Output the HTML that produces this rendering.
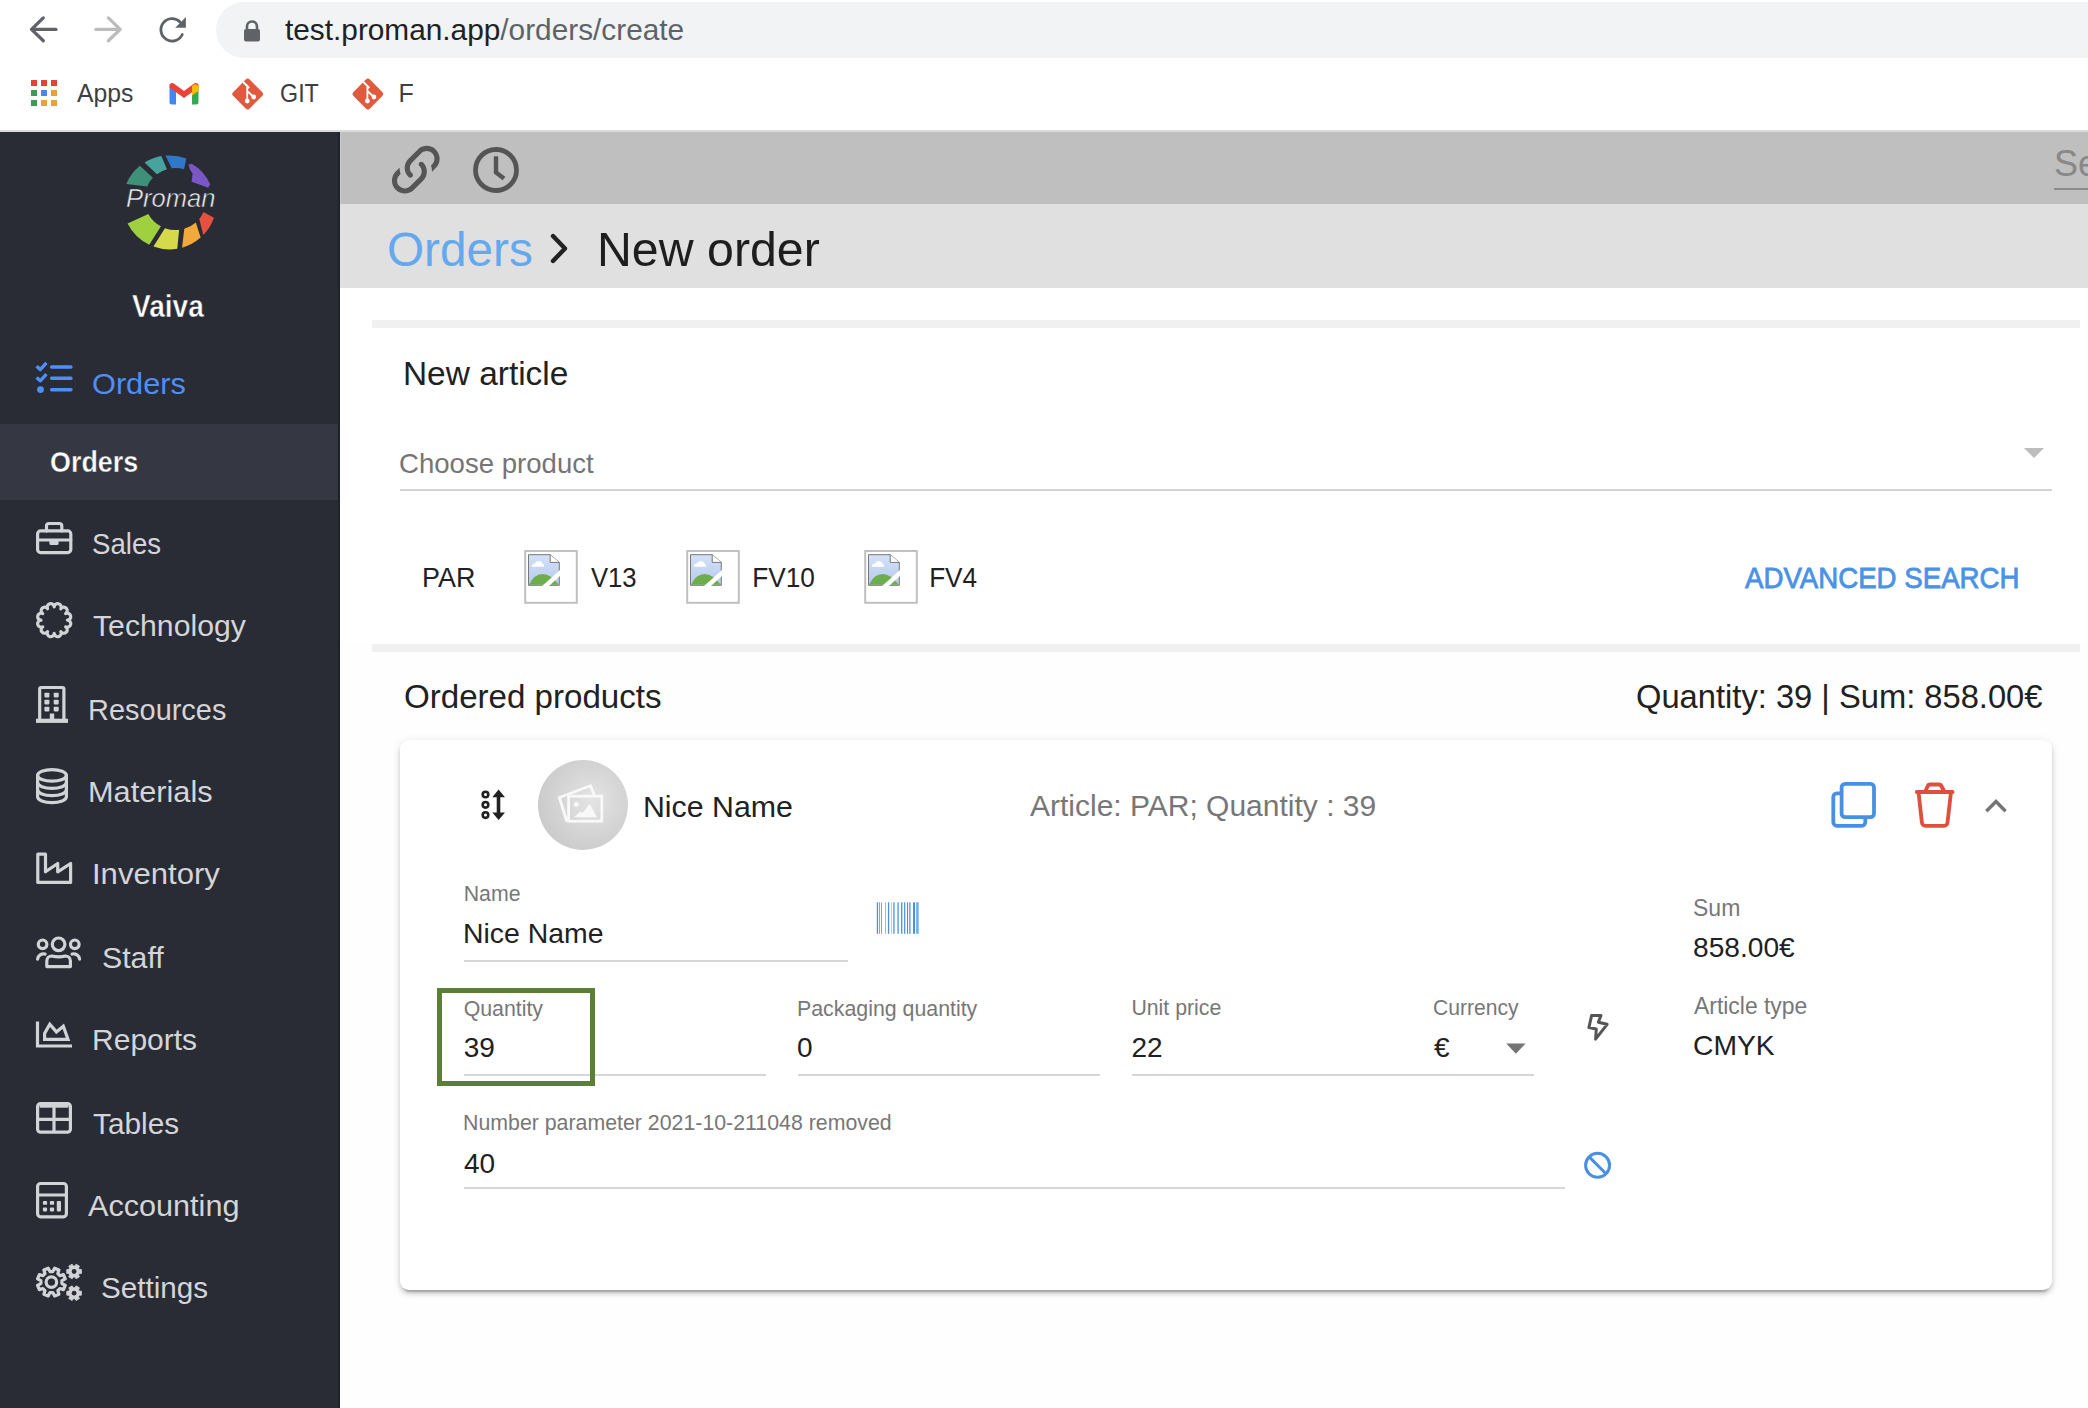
<!DOCTYPE html>
<html><head><meta charset="utf-8">
<style>
html,body{margin:0;padding:0;width:2088px;height:1408px;overflow:hidden;background:#fefefe;font-family:"Liberation Sans",sans-serif;}
.a{position:absolute;}
.t{position:absolute;white-space:nowrap;}
svg{position:absolute;overflow:visible;}
</style></head><body>
<!-- ===== Chrome ===== -->
<div class="a" style="left:0;top:0;width:2088px;height:130px;background:#fff"></div>
<div class="a" style="left:216px;top:2px;width:1900px;height:56px;border-radius:28px;background:#f1f3f4"></div>
<div class="a" style="left:0;top:130px;width:2088px;height:2px;background:#d9dadc"></div>
<!-- back -->
<svg style="left:0;top:0" width="2088" height="130">
 <path d="M43.3 17.9 L31.5 29.4 L43.3 40.8 M31.5 29.4 H56" fill="none" stroke="#5f6368" stroke-width="3.3" stroke-linecap="round" stroke-linejoin="round"/>
 <path d="M108.4 17.9 L120.2 29.4 L108.4 40.8 M120.2 29.4 H95.9" fill="none" stroke="#bbbcbe" stroke-width="3.3" stroke-linecap="round" stroke-linejoin="round"/>
 <path d="M182.3 34.5 A11.2 11.2 0 1 1 180 21.9" fill="none" stroke="#5f6368" stroke-width="2.8" stroke-linecap="round"/>
 <path d="M185.9 17.1 V27.8 H175.2 Z" fill="#5f6368"/>
 <!-- lock -->
 <path d="M247 30 v-3.5 a5 5 0 0 1 10 0 v3.5" fill="none" stroke="#5f6368" stroke-width="2.6"/>
 <rect x="244" y="29" width="16" height="12.5" rx="2" fill="#5f6368"/>
 <!-- apps grid -->
 <rect x="31" y="80" width="6" height="6" fill="#e34234"/><rect x="41" y="80" width="6" height="6" fill="#e34234"/><rect x="51" y="80" width="6" height="6" fill="#e34234"/>
 <rect x="31" y="90" width="6" height="6" fill="#3f9a55"/><rect x="41" y="90" width="6" height="6" fill="#4a86e8"/><rect x="51" y="90" width="6" height="6" fill="#e8a23a"/>
 <rect x="31" y="100" width="6" height="6" fill="#3f9a55"/><rect x="41" y="100" width="6" height="6" fill="#e8a23a"/><rect x="51" y="100" width="6" height="6" fill="#e8a23a"/>
 <!-- gmail -->
 <g transform="translate(169.5,83)">
  <path d="M0 4 a3 3 0 0 1 5 -2 L6.5 3.2 V21.6 H2.5 a2.5 2.5 0 0 1 -2.5 -2.5z" fill="#4285f4"/>
  <path d="M22.5 3.2 L24 2 a3 3 0 0 1 5 2 V19.1 a2.5 2.5 0 0 1 -2.5 2.5 H22.5z" fill="#34a853"/>
  <path d="M0 4.5 L14.5 15 L29 4.5 L29 1.5 a3 3 0 0 0 -5 -0.5 L14.5 8 L5 1 a3 3 0 0 0 -5 0.5z" fill="#ea4335"/>
  <path d="M22.5 3.2 L24 2 a3 3 0 0 1 5 2 V8 L22.5 12.5z" fill="#fbbc04"/>
 </g>
 <!-- git logos -->
 <g transform="translate(247.7,94)">
  <rect x="-11.6" y="-11.6" width="23.2" height="23.2" rx="2.5" transform="rotate(45)" fill="#e05a3f"/>
  <path d="M-4.5 -12 L1.5 -6 M-0.5 -8 V7 M-0.5 -3 L6 3" stroke="#fff" stroke-width="1.8" fill="none"/>
  <circle cx="-0.5" cy="7" r="2.4" fill="#fff"/><circle cx="6" cy="3" r="2.4" fill="#fff"/>
 </g>
 <g transform="translate(367.9,94)">
  <rect x="-11.6" y="-11.6" width="23.2" height="23.2" rx="2.5" transform="rotate(45)" fill="#e05a3f"/>
  <path d="M-4.5 -12 L1.5 -6 M-0.5 -8 V7 M-0.5 -3 L6 3" stroke="#fff" stroke-width="1.8" fill="none"/>
  <circle cx="-0.5" cy="7" r="2.4" fill="#fff"/><circle cx="6" cy="3" r="2.4" fill="#fff"/>
 </g>
</svg>
<div class="t" style="left:285px;top:14.5px;font-size:29.8px;line-height:30px;color:#202124">test.proman.app<span style="color:#5f6368">/orders/create</span></div>

<!-- ===== Sidebar ===== -->
<div class="a" style="left:0;top:132px;width:340px;height:1276px;background:#292c35"></div>
<div class="a" style="left:0;top:424px;width:340px;height:76px;background:#353842"></div>
<div class="a" style="left:338px;top:132px;width:2px;height:1276px;background:#20222a"></div>
<svg style="left:0;top:0" width="340" height="1408">
 <path d="M126.24 184.04 A47 47 0 0 1 139.92 165.87 L152.83 177.86 A31 31 0 0 0 147.18 186.39 Z" fill="#3e9079"/>
<path d="M144.59 162.54 A47 47 0 0 1 161.34 156.11 L166.96 169.20 A31 31 0 0 0 156.84 174.24 Z" fill="#48a39c"/>
<path d="M165.40 155.58 A47 47 0 0 1 186.34 158.52 L184.04 169.20 A31 31 0 0 0 171.72 168.23 Z" fill="#3077c9"/>
<path d="M191.75 163.86 A44.5 44.5 0 0 1 210.15 184.30 L208.2 187.7 L191.6 181.7 L192.6 173.4 L190.2 170 L188.4 164.8 Z" fill="#7b57c5"/>
<path d="M213.94 217.70 A47 47 0 0 1 203.31 235.05 L199.25 218.93 A31 31 0 0 0 203.60 212.10 Z" fill="#e5503f"/>
<path d="M200.64 237.60 A47 47 0 0 1 182.06 247.69 L184.30 228.72 A31 31 0 0 0 195.84 222.40 Z" fill="#f0a93a"/>
<path d="M177.26 248.76 A47 47 0 0 1 153.43 246.57 L164.90 228.13 A31 31 0 0 0 179.12 229.79 Z" fill="#d5d94a"/>
<path d="M149.27 244.82 A47 47 0 0 1 127.55 223.59 L148.33 213.93 A31 31 0 0 0 160.95 226.37 Z" fill="#9fd03f"/>
 <g fill="none" stroke="#4f8ef7" stroke-width="3.4" stroke-linecap="round" stroke-linejoin="round">
  <path d="M36.6 366.2 L40.3 369.6 L46.4 362.9" stroke-linecap="butt"/>
  <path d="M36.6 377.4 L40.3 380.8 L46.4 374.1" stroke-linecap="butt"/>
  <path d="M51.6 367 H71 M51.6 378.3 H71 M51.6 389.7 H71"/>
 </g>
 <circle cx="40.5" cy="389.6" r="3.4" fill="#4f8ef7"/>
 <g fill="none" stroke="#d2d3d6" stroke-width="3.2" stroke-linecap="round" stroke-linejoin="round">
  <!-- sales -->
  <rect x="37.6" y="530.9" width="33.2" height="21.7" rx="3"/>
  <path d="M46.5 530.9 V526 a2.5 2.5 0 0 1 2.5 -2.5 H59.3 a2.5 2.5 0 0 1 2.5 2.5 V530.9"/>
  <path d="M37.6 540 H70.8"/>
  <!-- technology rosette -->
  <path d="M54.20 607.00 A3.5 3.5 0 1 1 60.80 608.77 A3.5 3.5 0 1 1 65.63 613.60 A3.5 3.5 0 1 1 67.40 620.20 A3.5 3.5 0 1 1 65.63 626.80 A3.5 3.5 0 1 1 60.80 631.63 A3.5 3.5 0 1 1 54.20 633.40 A3.5 3.5 0 1 1 47.60 631.63 A3.5 3.5 0 1 1 42.77 626.80 A3.5 3.5 0 1 1 41.00 620.20 A3.5 3.5 0 1 1 42.77 613.60 A3.5 3.5 0 1 1 47.60 608.77 A3.5 3.5 0 1 1 54.20 607.00 Z"/>
  <!-- resources building -->
  <path d="M39.7 720.5 V689 a1.5 1.5 0 0 1 1.5 -1.5 H62.4 a1.5 1.5 0 0 1 1.5 1.5 V720.5" stroke-linecap="butt"/>
  <path d="M52 713.5 V720" stroke-width="4.4" stroke-linecap="butt"/>
  <!-- materials database -->
  <ellipse cx="52" cy="775.4" rx="14.4" ry="5.8"/>
  <path d="M37.6 775.4 V796.8 a14.4 5.8 0 0 0 28.8 0 V775.4"/>
  <path d="M37.6 782.6 a14.4 5.8 0 0 0 28.8 0"/>
  <path d="M37.6 789.8 a14.4 5.8 0 0 0 28.8 0"/>
  <!-- inventory factory -->
  <path d="M37.8 882.4 V854.2 H45.5 V871.8 L57.7 863.5 V871.8 L70.6 863.5 V882.4 Z"/>
  <!-- staff -->
  <circle cx="58.6" cy="944.3" r="6.3"/>
  <circle cx="42.6" cy="944.3" r="4.3"/>
  <circle cx="74.8" cy="944.3" r="4.3"/>
  <path d="M46.8 966.6 V961 a5 5 0 0 1 5 -5 Q58.6 957.6 65.4 956 a5 5 0 0 1 5 5 V966.6 Z"/>
  <path d="M37.6 959.2 a6 6 0 0 1 7.5 -5.2"/>
  <path d="M79.6 959.2 a6 6 0 0 0 -7.5 -5.2"/>
  <!-- reports -->
  <path d="M37.5 1021.5 V1046 H72" stroke-linecap="butt" stroke-linejoin="miter"/>
  <path d="M44.6 1039.3 V1033.5 L49.8 1024.2 L56.4 1031.9 L63.3 1026.2 L68 1039.3 Z" stroke-linejoin="miter"/>
  <!-- tables -->
  <rect x="37.6" y="1103.6" width="32.8" height="28.6" rx="3"/>
  <path d="M39.6 1105.4 H68.4" stroke-width="4.6" stroke-linecap="butt"/>
  <path d="M54 1106 V1132.2 M37.6 1119.4 H70.4" stroke-linecap="butt"/>
  <!-- accounting -->
  <rect x="37.6" y="1183.5" width="28.8" height="33.3" rx="3"/>
  <path d="M37.6 1195 H66.4"/>
 </g>
 <g fill="#d2d3d6">
  <rect x="44.4" y="692.8" width="5" height="4.6" rx="0.8"/><rect x="53.7" y="692.8" width="5" height="4.6" rx="0.8"/>
  <rect x="44.4" y="699.8" width="5" height="4.6" rx="0.8"/><rect x="53.7" y="699.8" width="5" height="4.6" rx="0.8"/>
  <rect x="44.4" y="706.8" width="5" height="4.6" rx="0.8"/><rect x="53.7" y="706.8" width="5" height="4.6" rx="0.8"/>
  <rect x="36" y="718.7" width="32" height="4.2"/>
  <rect x="49.4" y="540" width="9.2" height="5" rx="1.5"/>
  <rect x="42.9" y="1200.9" width="4.2" height="3.8" rx="0.8"/><rect x="49.9" y="1200.9" width="4.2" height="3.8" rx="0.8"/>
  <rect x="42.9" y="1207.6" width="4.2" height="3.8" rx="0.8"/><rect x="49.9" y="1207.6" width="4.2" height="3.8" rx="0.8"/>
  <rect x="56.8" y="1200.9" width="4.2" height="10.5" rx="0.8"/>
 </g>
 <path d="M61.91 1283.51 L65.23 1285.31 L63.45 1289.61 L59.83 1288.53 L57.83 1290.53 L58.91 1294.15 L54.61 1295.93 L52.81 1292.61 L49.99 1292.61 L48.19 1295.93 L43.89 1294.15 L44.97 1290.53 L42.97 1288.53 L39.35 1289.61 L37.57 1285.31 L40.89 1283.51 L40.89 1280.69 L37.57 1278.89 L39.35 1274.59 L42.97 1275.67 L44.97 1273.67 L43.89 1270.05 L48.19 1268.27 L49.99 1271.59 L52.81 1271.59 L54.61 1268.27 L58.91 1270.05 L57.83 1273.67 L59.83 1275.67 L63.45 1274.59 L65.23 1278.89 L61.91 1280.69 Z" fill="none" stroke="#d2d3d6" stroke-width="3.2" stroke-linejoin="round"/>
<circle cx="51.4" cy="1282.1" r="5.3" fill="none" stroke="#d2d3d6" stroke-width="3.2"/>
<path d="M79.28 1269.38 L81.44 1269.53 L81.44 1273.47 L79.28 1273.62 L78.52 1274.93 L79.47 1276.87 L76.07 1278.84 L74.86 1277.05 L73.34 1277.05 L72.13 1278.84 L68.73 1276.87 L69.68 1274.93 L68.92 1273.62 L66.76 1273.47 L66.76 1269.53 L68.92 1269.38 L69.68 1268.07 L68.73 1266.13 L72.13 1264.16 L73.34 1265.95 L74.86 1265.95 L76.07 1264.16 L79.47 1266.13 L78.52 1268.07 Z" fill="#d2d3d6" stroke="#d2d3d6" stroke-width="0.8" stroke-linejoin="round"/>
<circle cx="74.1" cy="1271.5" r="2.4" fill="#292c35"/>
<path d="M79.28 1291.08 L81.44 1291.23 L81.44 1295.17 L79.28 1295.32 L78.52 1296.63 L79.47 1298.57 L76.07 1300.54 L74.86 1298.75 L73.34 1298.75 L72.13 1300.54 L68.73 1298.57 L69.68 1296.63 L68.92 1295.32 L66.76 1295.17 L66.76 1291.23 L68.92 1291.08 L69.68 1289.77 L68.73 1287.83 L72.13 1285.86 L73.34 1287.65 L74.86 1287.65 L76.07 1285.86 L79.47 1287.83 L78.52 1289.77 Z" fill="#d2d3d6" stroke="#d2d3d6" stroke-width="0.8" stroke-linejoin="round"/>
<circle cx="74.1" cy="1293.2" r="2.4" fill="#292c35"/>
</svg>


<!-- ===== Top bars ===== -->
<div class="a" style="left:340px;top:132px;width:1748px;height:72px;background:#bfbfbf"></div>
<div class="a" style="left:340px;top:132px;width:1px;height:72px;background:#c9c9c9"></div>
<div class="a" style="left:340px;top:204px;width:1748px;height:84px;background:#e0e0e0"></div>
<div class="a" style="left:2054px;top:188px;width:40px;height:2px;background:#8c8c8c"></div>
<svg style="left:0;top:0" width="2088" height="300">
 <!-- link icon -->
 <path transform="translate(384.84,138.74) scale(2.58)" fill="#555" d="M10.59,13.41C11,13.8 11,14.44 10.59,14.83C10.2,15.22 9.56,15.22 9.17,14.83C7.22,12.88 7.22,9.71 9.17,7.76V7.76L12.71,4.22C14.66,2.27 17.83,2.27 19.78,4.22C21.73,6.17 21.730,9.34 19.78,11.29L18.29,12.78C18.3,11.96 18.17,11.14 17.89,10.36L18.36,9.88C19.54,8.71 19.54,6.81 18.36,5.64C17.19,4.46 15.29,4.46 14.12,5.64L10.59,9.17C9.41,10.34 9.41,12.24 10.59,13.41M13.41,9.17C13.8,8.78 14.44,8.78 14.83,9.17C16.78,11.12 16.78,14.29 14.83,16.24V16.24L11.29,19.78C9.34,21.73 6.17,21.73 4.22,19.78C2.270,17.83 2.27,14.66 4.22,12.71L5.71,11.22C5.7,12.04 5.83,12.86 6.11,13.65L5.64,14.12C4.46,15.29 4.46,17.19 5.64,18.36C6.81,19.54 8.71,19.54 9.88,18.36L13.41,14.83C14.59,13.66 14.59,11.76 13.41,10.59C13,10.2 13,9.56 13.41,9.17Z"/>
 <!-- clock -->
 <circle cx="496" cy="170" r="20.5" fill="none" stroke="#555" stroke-width="4.8"/>
 <path d="M496 156.2 V172.4 L504 178.4" fill="none" stroke="#555" stroke-width="4.4" stroke-linecap="butt" stroke-linejoin="miter"/>
 <!-- breadcrumb chevron -->
 <path d="M553 236 L565 248.5 L553 261" fill="none" stroke="#222" stroke-width="4.4" stroke-linecap="round" stroke-linejoin="round"/>
</svg>

<!-- ===== Content ===== -->
<div class="a" style="left:340px;top:288px;width:1748px;height:356px;background:#fff"></div>
<div class="a" style="left:372px;top:320px;width:1708px;height:8px;background:#f0f0f0"></div>
<div class="a" style="left:372px;top:644px;width:1708px;height:8px;background:#f0f0f0"></div>
<div class="a" style="left:400px;top:489px;width:1652px;height:2px;background:#d4d4d4"></div>
<svg style="left:0;top:0" width="2088" height="700">
 <path d="M2024 448 H2044 L2034 458z" fill="#bdbdbd"/>
</svg>
<svg style="left:0;top:0" width="2088" height="700">
 <defs>
  <linearGradient id="sky" x1="0" y1="0" x2="0" y2="1"><stop offset="0" stop-color="#d4e2f8"/><stop offset="1" stop-color="#b5c9ec"/></linearGradient>
  <g id="bimg">
   <rect x="1.2" y="1" width="51.6" height="51.8" fill="none" stroke="#c0c0c0" stroke-width="2"/>
   <path d="M4.5 4.7 H26.2 L35.3 12.4 V35.3 H4.5 Z" fill="url(#sky)" stroke="#777" stroke-width="1"/>
   <path d="M26.2 4.7 V12.4 H35.3" fill="#fff" stroke="#777" stroke-width="1"/>
   <path d="M5 34.8 Q10 24 18.6 23.9 Q27 24 34.8 34.8 Z" fill="#6cae4a"/>
   <path d="M7.6 16.8 a3 3 0 0 1 3.2 -3.2 a4.3 4.3 0 0 1 8 0.2 a2.5 2.5 0 0 1 1.2 3 z" fill="#fff"/>
   <path d="M17.8 36.3 L36 19.9 V26.1 L24.6 36.3 Z" fill="#fff"/>
  </g>
 </defs>
 <use href="#bimg" x="524" y="550"/>
 <use href="#bimg" x="686" y="550"/>
 <use href="#bimg" x="864" y="550"/>
</svg>


<div class="a" style="left:400px;top:740px;width:1652px;height:550px;border-radius:9px;background:#fff;box-shadow:0 6px 2px -4px rgba(0,0,0,.2),0 4px 4px 0 rgba(0,0,0,.14),0 2px 10px 0 rgba(0,0,0,.12)"></div>
<svg style="left:0;top:0" width="2088" height="1408">
 <!-- drag icon -->
 <g fill="none" stroke="#212121" stroke-width="2.6">
  <circle cx="485.5" cy="794.5" r="2.8"/><circle cx="485.5" cy="804.8" r="2.8"/><circle cx="485.5" cy="815.1" r="2.8"/>
 </g>
 <path d="M498.5 796 V813" stroke="#212121" stroke-width="3.6"/>
 <path d="M492.3 797.2 L498.6 789.5 L505 797.2 Z M492.3 812.6 L498.6 820 L505 812.6 Z" fill="#212121"/>
 <!-- avatar -->
 <defs>
  <radialGradient id="av" cx="0.6" cy="0.45" r="0.6">
   <stop offset="0" stop-color="#e4e4e4"/><stop offset="1" stop-color="#cbcbcb"/>
  </radialGradient>
 </defs>
 <circle cx="583" cy="805" r="45" fill="url(#av)"/>
 <g fill="none" stroke="#f9f9f9" stroke-width="2.8" stroke-linejoin="miter">
  <path d="M566.8 821.5 L559.4 797.5 L590.5 785.8 L594.3 795.5"/>
  <rect x="568.6" y="796.2" width="33.2" height="25"/>
 </g>
 <circle cx="576.3" cy="804.2" r="2.5" fill="#f9f9f9"/>
 <path d="M573.8 817.2 L580.5 811.5 L582.6 813 L589.7 803.8 L591 806 L597 817.2 Z" fill="#f9f9f9"/>
 <!-- copy icon -->
 <g fill="none" stroke="#4a90e2" stroke-width="3.8" stroke-linejoin="round">
  <rect x="1841.6" y="783.9" width="32.4" height="33.2" rx="3.5"/>
  <path d="M1841.6 793.4 H1836.8 a3.5 3.5 0 0 0 -3.5 3.5 V822.3 a3.5 3.5 0 0 0 3.5 3.5 H1861.8 a3.5 3.5 0 0 0 3.5 -3.5 V817.1"/>
 </g>
 <!-- trash -->
 <g fill="none" stroke="#e04e3e" stroke-width="3.8" stroke-linejoin="round" stroke-linecap="round">
  <path d="M1916.8 792 H1952.6"/>
  <path d="M1918.5 792 L1921.9 822.5 a3.5 3.5 0 0 0 3.5 3.3 H1944 a3.5 3.5 0 0 0 3.5 -3.3 L1951 792"/>
  <path d="M1925.5 791 L1927.5 786.5 a3 3 0 0 1 2.8 -2 H1938.8 a3 3 0 0 1 2.8 2 L1944 791"/>
 </g>
 <!-- chevron up -->
 <path d="M1986.3 811.2 L1996 801.5 L2005.6 811.2" fill="none" stroke="#757575" stroke-width="3.4"/>
 <!-- barcode -->
 <g fill="#4a90e2">
  <rect x="876.8" y="902.3" width="1.3" height="31.5"/>
  <rect x="879" y="902.3" width="1" height="31.5" opacity="0.75"/>
  <rect x="881" y="902.3" width="1" height="31.5" opacity="0.8"/>
  <rect x="885" y="902.3" width="1" height="31.5" opacity="0.6"/>
  <rect x="887.9" y="902.3" width="1.3" height="31.5"/>
  <rect x="891.2" y="902.3" width="0.8" height="31.5" opacity="0.5"/>
  <rect x="893" y="902.3" width="1.8" height="31.5" opacity="0.7"/>
  <rect x="897.3" y="902.3" width="1.6" height="31.5" opacity="0.8"/>
  <rect x="901" y="902.3" width="1.4" height="31.5" opacity="0.95"/>
  <rect x="904" y="902.3" width="1.3" height="31.5" opacity="0.95"/>
  <rect x="907" y="902.3" width="1" height="31.5"/>
  <rect x="908.9" y="902.3" width="1.8" height="31.5" opacity="0.75"/>
  <rect x="913" y="902.3" width="2" height="31.5"/>
  <rect x="916.1" y="902.3" width="2.6" height="31.5" opacity="0.75"/>
 </g>
 <!-- currency triangle -->
 <path d="M1506.2 1043.5 H1525.6 L1515.9 1053.7 Z" fill="#757575"/>
 <!-- lightning -->
 <path d="M1591.6 1015.5 H1601 L1598.3 1022.2 L1607.1 1024.3 L1595.6 1039.1 L1596.3 1029 L1588.9 1027.6 Z" fill="none" stroke="#555" stroke-width="3" stroke-linejoin="round"/>
 <!-- block -->
 <circle cx="1597.6" cy="1165.3" r="12" fill="none" stroke="#4a90e2" stroke-width="3"/>
 <path d="M1589.2 1156.9 L1606 1173.7" stroke="#4a90e2" stroke-width="3"/>
</svg>
<!-- underlines -->
<div class="a" style="left:464px;top:960px;width:384px;height:2px;background:#d6d6d6"></div>
<div class="a" style="left:464px;top:1074px;width:302px;height:2px;background:#d6d6d6"></div>
<div class="a" style="left:798px;top:1074px;width:302px;height:2px;background:#d6d6d6"></div>
<div class="a" style="left:1132px;top:1074px;width:402px;height:2px;background:#d6d6d6"></div>
<div class="a" style="left:464px;top:1187px;width:1101px;height:2px;background:#d6d6d6"></div>
<!-- green highlight -->
<div class="a" style="left:436.5px;top:988px;width:148px;height:88px;border:5px solid #5b7f36"></div>

<div class="t" style="left:77.0px;top:80.8px;font-size:25px;line-height:25px;color:#3c4043;font-weight:400;font-style:normal;transform-origin:0.00px 0;transform:scaleX(0.9897);">Apps</div>
<div class="t" style="left:280.0px;top:80.8px;font-size:25px;line-height:25px;color:#3c4043;font-weight:400;font-style:normal;transform-origin:1.00px 0;transform:scaleX(0.9284);">GIT</div>
<div class="t" style="left:398.6px;top:80.8px;font-size:25px;line-height:25px;color:#3c4043;font-weight:400;font-style:normal;">F</div>
<div class="t" style="left:132.0px;top:289.8px;font-size:32px;line-height:32px;color:#ffffff;font-weight:700;font-style:normal;transform-origin:0.00px 0;transform:scaleX(0.8774);-webkit-text-stroke:0.5px #292c35;">Vaiva</div>
<div class="t" style="left:92.4px;top:368.5px;font-size:30px;line-height:30px;color:#4f8ef7;font-weight:400;font-style:normal;transform-origin:1.00px 0;transform:scaleX(1.0247);">Orders</div>
<div class="t" style="left:49.5px;top:447.0px;font-size:30px;line-height:30px;color:#ffffff;font-weight:700;font-style:normal;transform-origin:1.00px 0;transform:scaleX(0.8946);-webkit-text-stroke:0.4px #353842;">Orders</div>
<div class="t" style="left:125.5px;top:186.2px;font-size:25px;line-height:25px;color:#eeeeee;font-weight:400;font-style:italic;transform-origin:0.00px 0;transform:scaleX(1.0216);-webkit-text-stroke:0.5px #292c35;">Proman</div>
<div class="t" style="left:92.3px;top:528.2px;font-size:30.4px;line-height:30.4px;color:#d4d5d8;font-weight:400;font-style:normal;transform-origin:1.00px 0;transform:scaleX(0.9088);">Sales</div>
<div class="t" style="left:93.0px;top:610.2px;font-size:30.4px;line-height:30.4px;color:#d4d5d8;font-weight:400;font-style:normal;transform-origin:0.00px 0;transform:scaleX(0.9945);">Technology</div>
<div class="t" style="left:88.0px;top:694.2px;font-size:30.4px;line-height:30.4px;color:#d4d5d8;font-weight:400;font-style:normal;transform-origin:2.00px 0;transform:scaleX(0.9520);">Resources</div>
<div class="t" style="left:88.0px;top:776.2px;font-size:30.4px;line-height:30.4px;color:#d4d5d8;font-weight:400;font-style:normal;transform-origin:2.00px 0;transform:scaleX(1.0108);">Materials</div>
<div class="t" style="left:92.0px;top:858.2px;font-size:30.4px;line-height:30.4px;color:#d4d5d8;font-weight:400;font-style:normal;transform-origin:2.00px 0;transform:scaleX(1.0233);">Inventory</div>
<div class="t" style="left:101.7px;top:942.2px;font-size:30.4px;line-height:30.4px;color:#d4d5d8;font-weight:400;font-style:normal;transform-origin:1.00px 0;transform:scaleX(0.9966);">Staff</div>
<div class="t" style="left:91.9px;top:1024.2px;font-size:30.4px;line-height:30.4px;color:#d4d5d8;font-weight:400;font-style:normal;transform-origin:2.00px 0;transform:scaleX(0.9874);">Reports</div>
<div class="t" style="left:92.7px;top:1108.2px;font-size:30.4px;line-height:30.4px;color:#d4d5d8;font-weight:400;font-style:normal;transform-origin:0.00px 0;transform:scaleX(0.9800);">Tables</div>
<div class="t" style="left:88.2px;top:1190.2px;font-size:30.4px;line-height:30.4px;color:#d4d5d8;font-weight:400;font-style:normal;transform-origin:0.00px 0;transform:scaleX(1.0070);">Accounting</div>
<div class="t" style="left:101.3px;top:1272.2px;font-size:30.4px;line-height:30.4px;color:#d4d5d8;font-weight:400;font-style:normal;transform-origin:1.00px 0;transform:scaleX(0.9750);">Settings</div>
<div class="t" style="left:387.4px;top:226.2px;font-size:48px;line-height:48px;color:#64a9ee;font-weight:400;font-style:normal;transform-origin:2.00px 0;transform:scaleX(0.9938);">Orders</div>
<div class="t" style="left:596.6px;top:226.2px;font-size:48px;line-height:48px;color:#1e1e1e;font-weight:400;font-style:normal;transform-origin:3.00px 0;transform:scaleX(1.0063);">New order</div>
<div class="t" style="left:2054.0px;top:145.9px;font-size:36px;line-height:36px;color:#888888;font-weight:400;font-style:normal;">Se</div>
<div class="t" style="left:402.6px;top:356.9px;font-size:33px;line-height:33px;color:#212121;font-weight:400;font-style:normal;transform-origin:2.00px 0;transform:scaleX(1.0134);">New article</div>
<div class="t" style="left:399.3px;top:450.4px;font-size:28px;line-height:28px;color:#757575;font-weight:400;font-style:normal;transform-origin:1.00px 0;transform:scaleX(0.9848);">Choose product</div>
<div class="t" style="left:422.4px;top:564.2px;font-size:28px;line-height:28px;color:#212121;font-weight:400;font-style:normal;transform-origin:2.00px 0;transform:scaleX(0.9603);">PAR</div>
<div class="t" style="left:591.4px;top:564.2px;font-size:28px;line-height:28px;color:#212121;font-weight:400;font-style:normal;transform-origin:0.00px 0;transform:scaleX(0.9158);">V13</div>
<div class="t" style="left:752.1px;top:564.2px;font-size:28px;line-height:28px;color:#212121;font-weight:400;font-style:normal;transform-origin:2.00px 0;transform:scaleX(0.9370);">FV10</div>
<div class="t" style="left:929.2px;top:564.2px;font-size:28px;line-height:28px;color:#212121;font-weight:400;font-style:normal;transform-origin:2.00px 0;transform:scaleX(0.9348);">FV4</div>
<div class="t" style="left:1745.2px;top:563.6px;font-size:29px;line-height:29px;color:#4a92e6;font-weight:400;font-style:normal;transform-origin:0.00px 0;transform:scaleX(0.9533);-webkit-text-stroke:0.8px #4a92e6;">ADVANCED SEARCH</div>
<div class="t" style="left:403.8px;top:680.7px;font-size:32.5px;line-height:32.5px;color:#212121;font-weight:400;font-style:normal;transform-origin:1.00px 0;transform:scaleX(1.0181);">Ordered products</div>
<div class="t" style="left:1635.8px;top:680.9px;font-size:32.5px;line-height:32.5px;color:#212121;font-weight:400;font-style:normal;transform-origin:1.00px 0;transform:scaleX(1.0059);">Quantity: 39 | Sum: 858.00€</div>
<div class="t" style="left:642.8px;top:791.5px;font-size:30px;line-height:30px;color:#212121;font-weight:400;font-style:normal;transform-origin:2.00px 0;transform:scaleX(1.0104);">Nice Name</div>
<div class="t" style="left:1029.7px;top:790.8px;font-size:30px;line-height:30px;color:#777777;font-weight:400;font-style:normal;transform-origin:0.00px 0;transform:scaleX(0.9998);">Article: PAR; Quantity : 39</div>
<div class="t" style="left:463.7px;top:884.4px;font-size:21.3px;line-height:21.3px;color:#777777;font-weight:400;font-style:normal;">Name</div>
<div class="t" style="left:462.7px;top:920.3px;font-size:28px;line-height:28px;color:#212121;font-weight:400;font-style:normal;transform-origin:2.00px 0;transform:scaleX(1.0146);">Nice Name</div>
<div class="t" style="left:463.7px;top:998.5px;font-size:21.3px;line-height:21.3px;color:#777777;font-weight:400;font-style:normal;">Quantity</div>
<div class="t" style="left:463.7px;top:1033.8px;font-size:28px;line-height:28px;color:#212121;font-weight:400;font-style:normal;">39</div>
<div class="t" style="left:797.0px;top:998.5px;font-size:21.3px;line-height:21.3px;color:#777777;font-weight:400;font-style:normal;transform-origin:1.00px 0;transform:scaleX(1.0016);">Packaging quantity</div>
<div class="t" style="left:797.0px;top:1033.8px;font-size:28px;line-height:28px;color:#212121;font-weight:400;font-style:normal;">0</div>
<div class="t" style="left:1131.4px;top:998.4px;font-size:21.3px;line-height:21.3px;color:#777777;font-weight:400;font-style:normal;">Unit price</div>
<div class="t" style="left:1131.4px;top:1034.2px;font-size:28px;line-height:28px;color:#212121;font-weight:400;font-style:normal;">22</div>
<div class="t" style="left:1433.1px;top:998.4px;font-size:21.3px;line-height:21.3px;color:#777777;font-weight:400;font-style:normal;transform-origin:1.00px 0;transform:scaleX(0.9901);">Currency</div>
<div class="t" style="left:1434.1px;top:1034.2px;font-size:28px;line-height:28px;color:#212121;font-weight:400;font-style:normal;">€</div>
<div class="t" style="left:1693.0px;top:896.8px;font-size:23px;line-height:23px;color:#777777;font-weight:400;font-style:normal;">Sum</div>
<div class="t" style="left:1693.0px;top:933.9px;font-size:28px;line-height:28px;color:#212121;font-weight:400;font-style:normal;transform-origin:1.00px 0;transform:scaleX(1.0046);">858.00€</div>
<div class="t" style="left:1694.0px;top:994.6px;font-size:23px;line-height:23px;color:#777777;font-weight:400;font-style:normal;transform-origin:0.00px 0;transform:scaleX(0.9958);">Article type</div>
<div class="t" style="left:1693.0px;top:1032.0px;font-size:28px;line-height:28px;color:#212121;font-weight:400;font-style:normal;transform-origin:1.00px 0;transform:scaleX(1.0097);">CMYK</div>
<div class="t" style="left:463.0px;top:1112.9px;font-size:21.3px;line-height:21.3px;color:#777777;font-weight:400;font-style:normal;transform-origin:1.00px 0;transform:scaleX(1.0012);">Number parameter 2021-10-211048 removed</div>
<div class="t" style="left:464.0px;top:1149.6px;font-size:28px;line-height:28px;color:#212121;font-weight:400;font-style:normal;">40</div>
</body></html>
